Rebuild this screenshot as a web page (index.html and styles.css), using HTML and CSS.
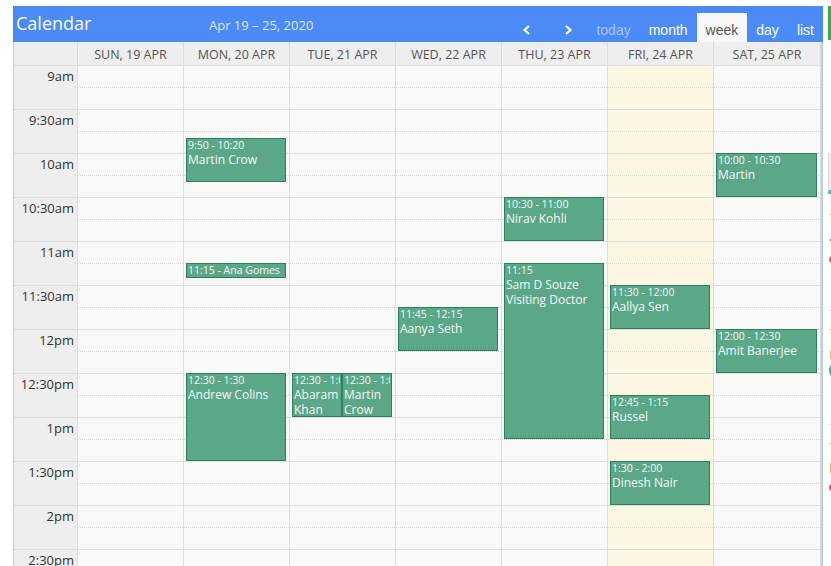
FILE: index.html
```html
<!DOCTYPE html>
<html>
<head>
<meta charset="utf-8">
<title>Calendar</title>
<link rel="stylesheet" href="styles.css">
</head>
<body>
<div class="page">
  <div class="cal">
    <div class="toolbar">
      <div class="title">Calendar</div>
      <div class="range">Apr 19 – 25, 2020</div>
      <div class="nav">
        <button class="btn chev prev" aria-label="prev"><svg width="9" height="10" viewBox="0 0 9 10"><polyline points="7,1 2.5,5 7,9" fill="none" stroke="#fff" stroke-width="2.2"/></svg></button>
        <button class="btn chev next" aria-label="next"><svg width="9" height="10" viewBox="0 0 9 10"><polyline points="2,1 6.5,5 2,9" fill="none" stroke="#fff" stroke-width="2.2"/></svg></button>
        <button class="btn today">today</button>
        <button class="btn">month</button>
        <button class="btn active">week</button>
        <button class="btn">day</button>
        <button class="btn">list</button>
      </div>
    </div>
    <div class="view">
      <div class="head">
        <div class="hc"></div>
        <div class="hc">SUN, 19 APR</div>
        <div class="hc">MON, 20 APR</div>
        <div class="hc">TUE, 21 APR</div>
        <div class="hc">WED, 22 APR</div>
        <div class="hc">THU, 23 APR</div>
        <div class="hc">FRI, 24 APR</div>
        <div class="hc">SAT, 25 APR</div>
      </div>
      <div class="body">
        <div class="cols">
          <div class="c axis"></div>
          <div class="c"></div>
          <div class="c"></div>
          <div class="c"></div>
          <div class="c"></div>
          <div class="c"></div>
          <div class="c today-col"></div>
          <div class="c"></div>
        </div>
        <div class="slats">
          <div class="slat"><div class="lbl">9am</div><div class="lane"><div class="q"></div></div></div>
          <div class="slat"><div class="lbl">9:30am</div><div class="lane"><div class="q"></div></div></div>
          <div class="slat"><div class="lbl">10am</div><div class="lane"><div class="q"></div></div></div>
          <div class="slat"><div class="lbl">10:30am</div><div class="lane"><div class="q"></div></div></div>
          <div class="slat"><div class="lbl">11am</div><div class="lane"><div class="q"></div></div></div>
          <div class="slat"><div class="lbl">11:30am</div><div class="lane"><div class="q"></div></div></div>
          <div class="slat"><div class="lbl">12pm</div><div class="lane"><div class="q"></div></div></div>
          <div class="slat"><div class="lbl">12:30pm</div><div class="lane"><div class="q"></div></div></div>
          <div class="slat"><div class="lbl">1pm</div><div class="lane"><div class="q"></div></div></div>
          <div class="slat"><div class="lbl">1:30pm</div><div class="lane"><div class="q"></div></div></div>
          <div class="slat"><div class="lbl">2pm</div><div class="lane"><div class="q"></div></div></div>
          <div class="slat"><div class="lbl">2:30pm</div><div class="lane"><div class="q"></div></div></div>
        </div>
        <div class="events">
          <div class="ec"></div>
          <div class="ec"></div>
          <div class="ec">
            <div class="ev" style="top:72px;height:44px"><div class="t">9:50 - 10:20</div><div class="n">Martin Crow</div></div>
            <div class="ev" style="top:197px;height:15px"><div class="t">11:15 - Ana Gomes</div></div>
            <div class="ev" style="top:307px;height:88px"><div class="t">12:30 - 1:30</div><div class="n">Andrew Colins</div></div>
          </div>
          <div class="ec">
            <div class="ev half" style="top:307px;height:44px;left:2px"><div class="t">12:30 - 1:00</div><div class="n">Abaram Khan</div></div>
            <div class="ev half" style="top:307px;height:44px;left:52px"><div class="t">12:30 - 1:00</div><div class="n">Martin Crow</div></div>
          </div>
          <div class="ec">
            <div class="ev" style="top:241px;height:44px"><div class="t">11:45 - 12:15</div><div class="n">Aanya Seth</div></div>
          </div>
          <div class="ec">
            <div class="ev" style="top:131px;height:44px"><div class="t">10:30 - 11:00</div><div class="n">Nirav Kohli</div></div>
            <div class="ev" style="top:197px;height:176px"><div class="t">11:15</div><div class="n">Sam D Souze Visiting Doctor</div></div>
          </div>
          <div class="ec">
            <div class="ev" style="top:219px;height:44px"><div class="t">11:30 - 12:00</div><div class="n">Aallya Sen</div></div>
            <div class="ev" style="top:329px;height:44px"><div class="t">12:45 - 1:15</div><div class="n">Russel</div></div>
            <div class="ev" style="top:395px;height:44px"><div class="t">1:30 - 2:00</div><div class="n">Dinesh Nair</div></div>
          </div>
          <div class="ec">
            <div class="ev" style="top:87px;height:44px"><div class="t">10:00 - 10:30</div><div class="n">Martin</div></div>
            <div class="ev" style="top:263px;height:44px"><div class="t">12:00 - 12:30</div><div class="n">Amit Banerjee</div></div>
          </div>
        </div>
      </div>
    </div>
  </div>
  <div class="side">
    <div class="s-green"></div>
    <div class="s-box"></div>
    <div class="s-dash first"></div>
    <div class="s-brown"></div>
    <div class="s-dot red r1"></div>
    <div class="s-line"></div>
    <div class="s-dash"></div>
    <div class="s-bar"></div>
    <div class="s-dot teal"></div>
    <div class="s-line"></div>
    <div class="s-dash"></div>
    <div class="s-bar b2"></div>
    <div class="s-dot red r2"></div>
  </div>
</div>
</body>
</html>
```

FILE: styles.css
```css
html, body {
  margin: 0;
  padding: 0;
  overflow: hidden;
  background: #fff;
}

.page {
  display: flex;
  align-items: flex-start;
  padding: 6px 0 0 13px;
  height: 560px;
  font-family: "Open Sans", "Liberation Sans", sans-serif;
}

.cal {
  width: 810px;
  flex: none;
}

/* toolbar */
.toolbar {
  display: flex;
  height: 36px;
  background: #4a8bf5;
  color: #fff;
}

.title {
  width: 193px;
  padding-left: 3px;
  font-size: 18px;
  line-height: 24px;
  padding-top: 5px;
}

.range {
  font-size: 13px;
  line-height: 18px;
  padding-top: 10px;
  color: #dde8fd;
}

.nav {
  margin-left: auto;
  display: flex;
  align-items: flex-end;
}

.btn {
  border: 0;
  margin: 0;
  background: transparent;
  color: #fff;
  font-family: "Liberation Sans", Arial, sans-serif;
  font-size: 14px;
  height: 29px;
  padding: 9px 9px 3px;
  line-height: 17px;
  cursor: pointer;
}

.btn.chev {
  width: 38px;
  padding: 0;
  display: flex;
  align-items: flex-end;
  justify-content: center;
  padding-bottom: 7px;
}

.btn.prev {
  margin-right: 4px;
}

.btn.today {
  color: #a7c5f8;
}

.btn.active {
  background: #f8f8f8;
  color: #555;
}

/* grid */
.view {
  border-left: 1px solid #b6cdf4;
  border-right: 2px solid #b6cdf4;
}

.head,
.cols,
.events {
  display: grid;
  grid-template-columns: 64px repeat(6, 106px) 107px;
}

.hc {
  box-sizing: border-box;
  height: 24px;
  background: #eeeeee;
  border-right: 1px solid #dddddd;
  border-bottom: 1px solid #dddddd;
  text-align: center;
  font-size: 12.5px;
  padding-top: 2px;
  line-height: 21px;
  color: #555;
}

.body {
  display: grid;
  height: 500px;
  overflow: hidden;
}

.cols,
.slats,
.events {
  grid-area: 1 / 1;
}

.c {
  box-sizing: border-box;
  border-right: 1px solid #dddddd;
  background: #f9f9f9;
}

.c.axis {
  background: #eeeeee;
}

.c.today-col {
  background: #fcf7e3;
}

.slat {
  display: flex;
  box-sizing: border-box;
  height: 44px;
  border-bottom: 1px solid #dddddd;
}

.lbl {
  width: 64px;
  flex: none;
  box-sizing: border-box;
  text-align: right;
  padding: 1px 4px 0 0;
  font-size: 13px;
  line-height: 18px;
  color: #333;
}

.lane {
  flex: 1;
}

.q {
  height: 21px;
  border-bottom: 1px dotted #d6d6d6;
}

.ec {
  position: relative;
}

.ev {
  position: absolute;
  left: 2px;
  right: 4px;
  box-sizing: border-box;
  background: #5ba888;
  border: 1px solid #2e7f5b;
  color: #f6f6f6;
  padding: 0 1px;
  overflow: hidden;
}

.ev.half {
  right: auto;
  width: 50px;
}

.ev .t {
  font-size: 10.5px;
  line-height: 13px;
  white-space: nowrap;
  overflow: hidden;
}

.ev .n {
  font-size: 12px;
  line-height: 15px;
}

/* right strip */
.side {
  flex: none;
  width: 60px;
  margin-left: 5px;
  display: flex;
  flex-direction: column;
}

.s-green {
  height: 34px;
  background: #34ad4c;
}

.s-box {
  margin-top: 113px;
  height: 37px;
  background: #eeeeee;
  border-left: 1px solid #dddddd;
  border-bottom: 4px solid #28c3d8;
}

.s-dash {
  margin: 18px 0 0 2px;
  height: 1px;
  width: 6px;
  background: #f3a93c;
}

.s-dash.first {
  margin-top: 20px;
}

.s-brown {
  margin: 24px 0 0 2px;
  height: 2px;
  width: 6px;
  background: #a85a2a;
}

.s-dot {
  margin-left: 1px;
  width: 12px;
  border-radius: 50%;
}

.s-dot.red {
  background: #ea4a64;
}

.s-dot.r1 {
  margin-top: 14px;
  height: 9px;
}

.s-dot.r2 {
  margin-top: 10px;
  height: 9px;
}

.s-dot.teal {
  margin-top: 4px;
  height: 15px;
  background: #2bb59b;
}

.s-line {
  margin: 46px 0 0 1px;
  height: 1px;
  background: #dddddd;
}

.s-bar {
  margin: 20px 0 0 2px;
  height: 9px;
  width: 8px;
  background: #f7b469;
}

.s-bar.b2 {
  margin-top: 19px;
  height: 10px;
}
```
